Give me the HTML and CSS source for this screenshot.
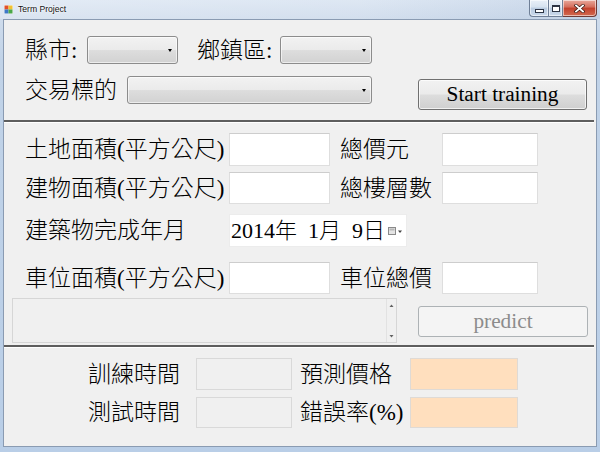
FILE: index.html
```html
<!DOCTYPE html>
<html>
<head>
<meta charset="utf-8">
<link rel="stylesheet" href="styles.css">
</head>
<body>
<div class="window">
  <div class="titlebar">
    <svg class="app-icon" width="9" height="9" viewBox="0 0 9 9">
      <rect x="0" y="0" width="9" height="9" fill="#f4f4f4"/>
      <rect x="0.5" y="0.5" width="4" height="4" fill="#e0502c"/>
      <rect x="4.5" y="0.5" width="4" height="4" fill="#f2c230"/>
      <rect x="0.5" y="4.5" width="4" height="4" fill="#3c78c8"/>
      <rect x="4.5" y="4.5" width="4" height="4" fill="#4aa84a"/>
    </svg>
    <span class="title">Term Project</span>
    <div class="caption-btns">
      <div class="cb cb-min"><span class="min-glyph"></span></div>
      <div class="cb cb-max"><span class="max-glyph"></span></div>
      <div class="cb cb-close">
        <svg width="11" height="9" viewBox="0 0 11 9">
          <path d="M2 1.5 L9 7.5 M9 1.5 L2 7.5" stroke="#3a1a14" stroke-width="3.2" stroke-linecap="square"/>
          <path d="M2 1.5 L9 7.5 M9 1.5 L2 7.5" stroke="#ffffff" stroke-width="1.8" stroke-linecap="square"/>
        </svg>
      </div>
    </div>
  </div>

  <div class="client">
    <section class="sec-a">
      <div class="row row-a1">
        <span class="lbl w-city">縣市:</span>
        <div class="combo w-combo1"></div>
        <span class="lbl w-town">鄉鎮區:</span>
        <div class="combo w-combo2"></div>
      </div>
      <div class="row row-a2">
        <span class="lbl w-target">交易標的</span>
        <div class="combo w-combo3"></div>
        <button class="btn btn-start">Start training</button>
      </div>
    </section>

    <div class="sep sep-1"></div>

    <section class="sec-b">
      <div class="row row-b row-b1">
        <span class="lbl w-lbl1">土地面積(平方公尺)</span>
        <div class="tb tb-w1"></div>
        <span class="lbl w-lbl2">總價元</span>
        <div class="tb tb-w2"></div>
      </div>
      <div class="row row-b row-b2">
        <span class="lbl w-lbl1">建物面積(平方公尺)</span>
        <div class="tb tb-w1"></div>
        <span class="lbl w-lbl2">總樓層數</span>
        <div class="tb tb-w2"></div>
      </div>
      <div class="row row-b row-b3">
        <span class="lbl w-lbl1">建築物完成年月</span>
        <div class="datepicker">
          <span class="date-text">2014年<span class="dgap"></span>1月<span class="dgap"></span>9日</span>
          <svg class="cal-icon" width="15" height="9" viewBox="0 0 15 9">
            <rect x="0.5" y="0.5" width="7" height="7" fill="#e4e4e4" stroke="#8a8a8a"/>
            <rect x="1.5" y="1.5" width="5" height="2" fill="#b8b8b8"/>
            <path d="M10 3.5 L14 3.5 L12 6 Z" fill="#444"/>
          </svg>
        </div>
      </div>
      <div class="row row-b row-b4">
        <span class="lbl w-lbl1">車位面積(平方公尺)</span>
        <div class="tb tb-w1"></div>
        <span class="lbl w-lbl2">車位總價</span>
        <div class="tb tb-w2"></div>
      </div>
      <div class="row row-b5">
        <div class="memo">
          <div class="memo-body"></div>
          <div class="memo-scroll">
            <svg width="9" height="6" viewBox="0 0 9 6"><path d="M2.5 4 L6.5 4 L4.5 1.5 Z" fill="#606060"/></svg>
            <svg width="9" height="6" viewBox="0 0 9 6"><path d="M2.5 2 L6.5 2 L4.5 4.5 Z" fill="#606060"/></svg>
          </div>
        </div>
        <button class="btn btn-predict" disabled>predict</button>
      </div>
    </section>

    <div class="sep sep-2"></div>

    <section class="sec-c">
      <div class="row row-c row-c1">
        <span class="lbl w-lbl3">訓練時間</span>
        <div class="tb tb-ro tb-w3"></div>
        <span class="lbl w-lbl4">預測價格</span>
        <div class="tb tb-peach tb-w4"></div>
      </div>
      <div class="row row-c row-c2">
        <span class="lbl w-lbl3">測試時間</span>
        <div class="tb tb-ro tb-w3"></div>
        <span class="lbl w-lbl4">錯誤率(%)</span>
        <div class="tb tb-peach tb-w4"></div>
      </div>
    </section>
  </div>
</div>
</body>
</html>
```

FILE: styles.css
```css
html, body {
  margin: 0;
  padding: 0;
}
body {
  width: 600px;
  height: 452px;
  overflow: hidden;
  background: #bcd0e7;
}
.window {
  width: 600px;
  height: 452px;
  display: flex;
  flex-direction: column;
  background: linear-gradient(180deg, #dae5f2 0px, #cfdcec 18px, #c1d3e8 60px, #b9cee7 100%);
  font-family: "Liberation Serif", "Noto Sans CJK TC", serif;
  color: #000;
}

/* title bar */
.titlebar {
  height: 19px;
  flex: none;
  display: flex;
  align-items: flex-start;
  background: linear-gradient(90deg, rgba(255,255,255,0.25) 0, rgba(255,255,255,0.1) 60%, rgba(120,150,190,0.15) 100%);
}
.app-icon {
  margin: 5px 0 0 4px;
  flex: none;
}
.title {
  margin: 4px 0 0 5px;
  font-family: "Liberation Sans", sans-serif;
  font-size: 8.6px;
  line-height: 10px;
  color: #111;
  text-shadow: 0 0 3px #fff, 0 0 2px #fff;
}
.caption-btns {
  margin-left: auto;
  margin-right: 3px;
  display: flex;
  height: 17px;
}
.cb {
  box-sizing: border-box;
  height: 17px;
  display: flex;
  align-items: center;
  justify-content: center;
  border: 1px solid #6f7f96;
  border-top: none;
  box-shadow: inset 0 0 0 1px rgba(255,255,255,0.55);
}
.cb-min {
  width: 19px;
  border-bottom-left-radius: 4px;
  border-right: none;
  background: linear-gradient(180deg, #e9f0f8 0%, #d6e2ef 45%, #b9cbe0 50%, #c9d8ea 100%);
}
.cb-max {
  width: 15px;
  background: linear-gradient(180deg, #e9f0f8 0%, #d6e2ef 45%, #b9cbe0 50%, #c9d8ea 100%);
}
.cb-close {
  width: 34px;
  border-left: none;
  border-color: #6e3a36;
  border-bottom-right-radius: 4px;
  background: linear-gradient(180deg, #e9a99c 0%, #d46c5a 45%, #c2402c 50%, #d2694f 100%);
}
.min-glyph {
  display: block;
  width: 7px;
  height: 2px;
  margin-top: 6px;
  background: #fff;
  border: 1px solid #2c3444;
}
.max-glyph {
  display: block;
  box-sizing: border-box;
  width: 8px;
  height: 7px;
  border: 1px solid #2c3444;
  border-top-width: 2px;
  background: #fff;
  box-shadow: inset 0 0 0 1px #fff;
}

/* client area */
.client {
  box-sizing: border-box;
  height: 428px;
  margin: 0 3px;
  border: 1px solid #8a9bb2;
  background: #f0f0f0;
  display: flex;
  flex-direction: column;
  padding-top: 16px;
}

.row {
  display: flex;
  flex: none;
}
.lbl {
  display: flex;
  align-items: center;
  flex: none;
  font-size: 23px;
  font-weight: 300;
  line-height: 1;
  white-space: nowrap;
}

/* section A */
.row-a1 {
  height: 28px;
  align-items: center;
  padding-left: 21px;
}
.w-city { width: 62px; height: 28px; }
.w-town { width: 83px; height: 28px; margin-left: 19px; }
.w-combo1 { width: 91px; }
.w-combo2 { width: 92px; }
.row-a2 {
  margin-top: 12px;
  align-items: flex-start;
  padding-left: 21px;
}
.w-target { width: 102px; height: 28px; }
.w-combo3 { width: 245px; }

.combo {
  box-sizing: border-box;
  height: 28px;
  flex: none;
  position: relative;
  border: 1px solid #8c8c8c;
  border-radius: 3px;
  background: linear-gradient(180deg, #f2f2f2 0%, #ebebeb 48%, #dddddd 52%, #d2d2d2 100%);
  box-shadow: inset 0 0 0 1px rgba(255,255,255,0.6);
}
.combo::after {
  content: "";
  position: absolute;
  right: 5px;
  top: 12px;
  border-style: solid;
  border-width: 3px 2.5px 0 2.5px;
  border-color: #000 transparent transparent transparent;
}

.btn {
  box-sizing: border-box;
  flex: none;
  margin: 0;
  padding: 0;
  font-family: "Liberation Serif", serif;
  font-size: 21.3px;
  line-height: 1;
  border-radius: 3px;
}
.btn-start {
  width: 169px;
  height: 31px;
  margin-left: 46px;
  margin-top: 3px;
  color: #000;
  border: 1px solid #707070;
  background: linear-gradient(180deg, #f2f2f2 0%, #ebebeb 48%, #dddddd 52%, #cfcfcf 100%);
  box-shadow: inset 0 0 0 1px rgba(255,255,255,0.7);
}
.btn-predict {
  width: 170px;
  height: 31px;
  margin-left: 21px;
  margin-top: 8px;
  color: #8c8c8c;
  border: 1px solid #adb2b5;
  background: #f4f4f4;
}

/* separators */
.sep {
  flex: none;
  height: 2px;
  margin-right: 2px;
  background: #5e5e5e;
  border-bottom: 1px solid #ffffff;
}
.sep-1 { margin-top: 10px; }
.sep-2 { margin-top: 2px; }

/* section B */
.row-b {
  padding-left: 21px;
  align-items: center;
}
.row-b1 { margin-top: 10px; height: 33px; }
.row-b2 { margin-top: 6px; height: 32px; }
.row-b3 { margin-top: 10px; height: 33px; }
.row-b4 { margin-top: 15px; height: 32px; }
.w-lbl1 { width: 204px; }
.w-lbl2 { width: 102px; margin-left: 10px; }

.tb {
  box-sizing: border-box;
  flex: none;
  height: 100%;
  background: #fff;
  border: 1px solid #dedede;
  border-top-color: #cdcdcd;
}
.tb-w1 { width: 101px; }
.tb-w2 { width: 96px; }

.datepicker {
  box-sizing: border-box;
  width: 178px;
  height: 33px;
  flex: none;
  display: flex;
  align-items: center;
  background: #fff;
  border: 1px solid #ececec;
  padding-left: 1px;
}
.date-text {
  font-size: 22px;
  font-weight: 300;
  line-height: 1;
  white-space: nowrap;
}
.dgap {
  display: inline-block;
  width: 11px;
}
.cal-icon {
  margin-left: auto;
  margin-right: 3px;
  margin-top: 2px;
}

.row-b5 {
  margin-top: 4px;
  padding-left: 8px;
  align-items: flex-start;
}
.memo {
  box-sizing: border-box;
  width: 385px;
  height: 45px;
  flex: none;
  display: flex;
  border: 1px solid #d6d6d6;
  background: #f0f0f0;
}
.memo-body {
  flex: 1;
}
.memo-scroll {
  width: 9px;
  border-left: 1px solid #e2e2e2;
  display: flex;
  flex-direction: column;
  justify-content: space-between;
  padding: 4px 0 3px;
}

/* section C */
.row-c {
  padding-left: 84px;
  align-items: center;
}
.row-c1 { margin-top: 10px; height: 32px; }
.row-c2 { margin-top: 7px; height: 31px; }
.w-lbl3 { width: 108px; }
.w-lbl4 { width: 110px; margin-left: 8px; }
.tb-w3 { width: 96px; }
.tb-w4 { width: 108px; }
.tb-ro {
  background: #f0f0f0;
  border-color: #d9d9d9;
}
.tb-peach {
  background: #ffdfbe;
  border-color: #dfdad5;
}
```
